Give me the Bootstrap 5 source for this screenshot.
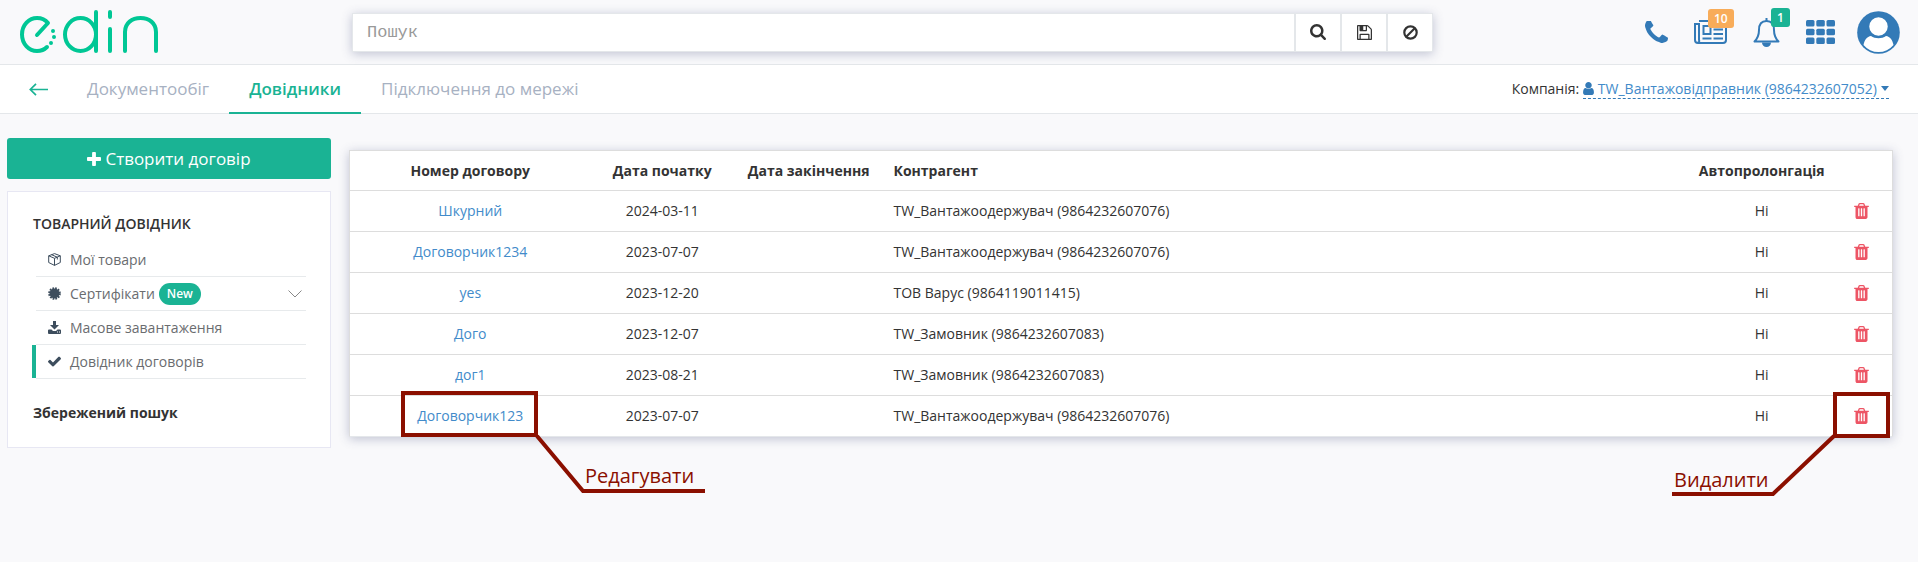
<!DOCTYPE html>
<html lang="uk">
<head>
<meta charset="utf-8">
<meta name="viewport" content="width=device-width, initial-scale=1">
<title>EDIN – Довідник договорів</title>
<link href="https://cdn.jsdelivr.net/npm/bootstrap@5.3.0/dist/css/bootstrap.min.css" rel="stylesheet">
<style>
:root{--green:#1ab394;--blue:#337ab7;--line:#e4e7ea}
body{background:#f9f9fb;color:#333;font:14px/20px "Open Sans","Noto Sans",sans-serif}
a{color:var(--blue);text-decoration:none}
svg{display:block;flex:none}
.fa{fill:currentColor}
.topbar{height:65px;border-bottom:1px solid var(--line);padding-right:18px}
.brand-box{width:352px;padding:0 0 2px 20px}
.search{flex:0 0 56.9%;height:39px;border:1px solid var(--line);box-shadow:0 2px 10px rgba(60,70,120,.3)}
.search .form-control{border:0;border-radius:0;padding:2px 14px 0;font:17px/24px "Liberation Mono",monospace;box-shadow:none}
.search .form-control::placeholder{color:#999;opacity:1}
.search .btn{width:46px;border:0;border-left:2px solid var(--line);border-radius:0;background:#fff;color:#333;padding:0}
.tool{color:var(--blue)}
.tool a+a{margin-left:26px}
.count{position:absolute;top:-10px;height:19px;padding:0 6px;border-radius:3px;color:#fff;font-size:12px;font-weight:600;line-height:19px}
.count-news{left:14px;background:#f8ac59}
.count-bell{left:18px;background:var(--green)}
.tool .profile{margin-left:22px}
.subnav{height:49px;background:#fff;border-bottom:1px solid var(--line);padding:0 29px 0 29px}
.subnav .nav{margin-left:19px;height:49px}
.subnav .nav-link{padding:0 20px;height:49px;line-height:48px;font-size:17px;font-weight:500;color:#a7b1c2;border-bottom:2px solid transparent}
.subnav .nav-link.active{color:var(--green);border-color:var(--green);font-weight:600}
.company{border-bottom:1px dashed var(--blue);line-height:19px}
.company span{color:#428bca}
.side{width:324px;flex:none}
.btn-create{background:var(--green);color:#fff;font-size:17px;line-height:24px;padding:8px;height:41px;border:0;border-radius:3px}
.panel{margin-top:12px;border:1px solid #e7e7f3;background:#fff;padding:22px 24px 24px 25px}
.panel h2{font-size:14px;line-height:20px;margin:0}
.menu{margin:9px 0 24px 3px;padding:0;list-style:none}
.menu li{height:34px;border-bottom:1px solid #e7eaec}
.menu a{color:#6a6c6f;height:33px;padding-left:12px}
.menu svg{color:#3d4d5d;margin-right:9px}
.menu .active{box-shadow:-4px 0 0 var(--green)}
.badge-new{background:var(--green);font-size:12px;line-height:16px;font-weight:600;padding:3px 8px;margin-left:4px}
.list{margin:12px 25px 0 18px;border:1px solid #ddd;border-bottom-color:#e4e7ea;background:#fff;box-shadow:0 2px 10px rgba(60,70,120,.3)}
.list table{table-layout:fixed;width:100%;border-collapse:separate;border-spacing:0}
.list th,.list td{padding:10px 4px;text-align:center}
.list thead tr>*{padding-bottom:9px}
.list td{border-top:1px solid #ddd}
.list .who{text-align:left;padding-left:10px}
.list td a{color:#428bca}
.del{border:0;background:none;padding:0;color:#ed5565;display:block;margin:0 auto}
.note{position:absolute;top:-5px;pointer-events:none;overflow:visible;fill:none;stroke:#8b0f00;stroke-width:4}
.note text{fill:#8b0f00;stroke:none;font-size:20px}
.note-edit{left:calc(50% - 69px)}
.note-del{left:calc(50% - 190px)}
</style>
</head>
<body class="min-vh-100">
<svg width="0" height="0" class="position-absolute" aria-hidden="true"><defs>
<symbol id="trash" viewBox="192 128 1408 1536"><path d="M704 1376v-704q0-14-9-23t-23-9h-64q-14 0-23 9t-9 23v704q0 14 9 23t23 9h64q14 0 23-9t9-23zm256 0v-704q0-14-9-23t-23-9h-64q-14 0-23 9t-9 23v704q0 14 9 23t23 9h64q14 0 23-9t9-23zm256 0v-704q0-14-9-23t-23-9h-64q-14 0-23 9t-9 23v704q0 14 9 23t23 9h64q14 0 23-9t9-23zm-544-992h448l-48-117q-7-9-17-11h-317q-10 2-17 11zm928 32v64q0 14-9 23t-23 9h-96v948q0 83-47 143.5t-113 60.5h-832q-66 0-113-58.5t-47-141.5v-952h-96q-14 0-23-9t-9-23v-64q0-14 9-23t23-9h309l70-167q15-37 54-63t79-26h320q40 0 79 26t54 63l70 167h309q14 0 23 9t9 23z"/></symbol>
</defs></svg>

<header class="topbar d-flex align-items-center">
  <a href="#" class="brand-box flex-shrink-0" aria-label="edin">
    <svg width="138" height="43" viewBox="0 0 138 43" fill="none" stroke="#00c795" stroke-width="4" stroke-linecap="round" stroke-linejoin="round">
      <path d="M17 25 28 13C24 8 19 8 17 8 9 8 2 15 2 24.500S9 41 17 41C21 41 25 39 27 37"/>
      <ellipse cx="60.500" cy="24.500" rx="15.500" ry="16.500"/><path d="M76 2V41M90 2V7M90 19V41M105 41V22C105 13 112 8 120.500 8S136 13 136 22V41"/>
      <path d="M33 21v0M34 27v0M31 33v0" stroke-width="4"/>
    </svg>
  </a>
  <form class="search d-flex bg-white" role="search">
    <input type="text" class="form-control" placeholder="Пошук" aria-label="Пошук">
    <button type="button" class="btn d-flex align-items-center justify-content-center flex-shrink-0" aria-label="Шукати"><svg class="fa" width="16" height="16" viewBox="64 128 1664 1664"><path d="M1216 832q0-185-131.500-316.500t-316.500-131.500-316.500 131.500-131.500 316.500 131.500 316.500 316.500 131.500 316.500-131.500 131.500-316.500zm512 832q0 52-38 90t-90 38q-54 0-90-38l-343-342q-179 124-399 124-143 0-273.500-55.500t-225-150-150-225-55.500-273.500 55.500-273.500 150-225 225-150 273.500-55.500 273.500 55.500 225 150 150 225 55.500 273.500q0 220-124 399l343 343q37 37 37 90z"/></svg></button>
    <button type="button" class="btn d-flex align-items-center justify-content-center flex-shrink-0" aria-label="Зберегти"><svg class="fa" width="15" height="15" viewBox="128 128 1536 1536"><path d="M512 1536h768v-384h-768v384zm896 0h128v-896q0-14-10-38.500t-20-34.500l-281-281q-10-10-34-20t-39-10v416q0 40-28 68t-68 28h-576q-40 0-68-28t-28-68v-416h-128v1280h128v-416q0-40 28-68t68-28h832q40 0 68 28t28 68v416zm-384-928v-320q0-13-9.500-22.500t-22.500-9.500h-192q-13 0-22.500 9.500t-9.500 22.500v320q0 13 9.500 22.500t22.500 9.500h192q13 0 22.500-9.500t9.500-22.500zm640 32v928q0 40-28 68t-68 28h-1344q-40 0-68-28t-28-68v-1344q0-40 28-68t68-28h928q40 0 88 20t76 48l280 280q28 28 48 76t20 88z"/></svg></button>
    <button type="button" class="btn d-flex align-items-center justify-content-center flex-shrink-0" aria-label="Очистити"><svg width="15" height="15" viewBox="0 0 15 15" fill="none" stroke="currentColor" stroke-width="2.200"><circle cx="7.500" cy="7.500" r="6.200"/><path d="M12 3 3 12"/></svg></button>
  </form>
  <div class="d-flex align-items-center ms-auto tool">
    <a href="#" aria-label="Телефон"><svg class="fa" width="23" height="23" viewBox="192 192 1408 1408"><path d="M1600 1240q0 27-10 70.500t-21 68.500q-21 50-122 106-94 51-186 51-27 0-53-3.500t-57.500-12.500-47-14.500-55.500-20.500-49-18q-98-35-175-83-127-79-264-216t-216-264q-48-77-83-175-3-9-18-49t-20.500-55.500-14.500-47-12.500-57.500-3.500-53q0-92 51-186 56-101 106-122 25-11 68.500-21t70.500-10q14 0 21 3 18 6 53 76 11 19 30 54t35 63.500 31 53.500q3 4 17.500 25t21.500 35.500 7 28.500q0 20-28.500 50t-62 55-62 53-28.500 46q0 9 5 22.500t8.500 20.500 14 24 11.500 19q76 137 174 235t235 174q2 1 19 11.500t24 14 20.500 8.500 22.500 5q18 0 46-28.500t53-62 55-62 50-28.500q14 0 28.500 7t35.500 21.500 25 17.500q25 15 53.500 31t63.500 35 54 30q70 35 76 53 3 7 3 21z"/></svg></a>
    <a href="#" class="position-relative" aria-label="Новини"><svg width="33" height="26" viewBox="0 0 33 26" fill="none" stroke="currentColor" stroke-width="2"><path d="M5 2H32V21a3 3 0 0 1-3 3H4a3 3 0 0 1-3-3V5H5V21a2 2 0 0 1-2 3"/><path d="M9.500 7h7v8h-7zM19.500 6H29M19.500 10.500H29M19.500 15H29M8.500 19.500h9M19.500 19.500H29"/></svg><span class="count count-news">10</span></a>
    <a href="#" class="position-relative" aria-label="Сповіщення"><svg width="27" height="29" viewBox="0 0 27 29" fill="none" stroke="currentColor" stroke-width="2" stroke-linejoin="round"><path d="M13.500 3C8 3 6 7 6 12 6 18 4 21 1.500 23.500H25.500C23 21 21 18 21 12 21 7 19 3 13.500 3z"/><path d="M13.500 0v3"/><path d="M9 24.500h9a4.500 4.500 0 0 1-9 0z" fill="currentColor" stroke="none"/></svg><span class="count count-bell">1</span></a>
    <a href="#" aria-label="Застосунки"><svg class="fa" width="29" height="24" viewBox="0 0 29 24"><g id="dots"><rect width="8.500" height="6.500" rx="1.500"/><rect x="10.300" width="8.500" height="6.500" rx="1.500"/><rect x="20.500" width="8.500" height="6.500" rx="1.500"/></g><use href="#dots" y="8.700"/><use href="#dots" y="17.400"/></svg></a>
    <a href="#" class="profile" aria-label="Профіль"><svg width="43" height="43" viewBox="0 0 43 43"><circle cx="21.500" cy="21.500" r="21.300" fill="currentColor"/><path d="M6.500 34C7.500 29 10 25.500 14 25 18 28 25 28 29 25 33 25.500 35.500 29 36.500 34A19.500 19.500 0 0 1 6.500 34z" fill="#fff"/><circle cx="21.500" cy="15.500" r="10" fill="#fff" stroke="currentColor" stroke-width="1.500"/></svg></a>
  </div>
</header>

<div class="subnav d-flex align-items-center">
  <a href="#" aria-label="Назад"><svg width="19" height="13" viewBox="0 0 19 13" fill="none" stroke="#1ab394" stroke-width="1.700"><path d="M7 .8 1.300 6.500 7 12.200M1.500 6.500H19"/></svg></a>
  <nav class="nav flex-nowrap">
    <a class="nav-link" href="#">Документообіг</a>
    <a class="nav-link active" aria-current="page" href="#">Довідники</a>
    <a class="nav-link" href="#">Підключення до мережі</a>
  </nav>
  <div class="ms-auto d-flex text-nowrap">Компанія:&nbsp;<a href="#" class="company d-flex align-items-center"><svg class="fa" width="11" height="13" viewBox="256 128 1280 1536"><path d="M1536 1399q0 109-62.500 187t-150.500 78h-854q-88 0-150.500-78t-62.500-187q0-85 8.500-160.500t31.500-152 58.500-131 94-89 134.500-34.500q131 128 313 128t313-128q76 0 134.500 34.500t94 89 58.500 131 31.500 152 8.500 160.500zm-256-887q0 159-112.500 271.500t-271.500 112.500-271.500-112.500-112.500-271.500 112.500-271.500 271.500-112.500 271.500 112.500 112.500 271.500z"/></svg><span class="ms-1 me-1">TW_Вантажовідправник (9864232607052)</span><svg class="fa" width="8" height="5" viewBox="0 0 8 5"><path d="M0 0h8L4 5z"/></svg></a></div>
</div>

<main class="d-flex align-items-start" style="padding:24px 0 0 7px">
  <aside class="side">
    <button type="button" class="btn btn-create w-100 d-flex align-items-center justify-content-center"><svg class="fa me-1" width="14" height="14" viewBox="192 128 1408 1408"><path d="M1600 736v192q0 40-28 68t-68 28h-416v416q0 40-28 68t-68 28h-192q-40 0-68-28t-28-68v-416h-416q-40 0-68-28t-28-68v-192q0-40 28-68t68-28h416v-416q0-40 28-68t68-28h192q40 0 68 28t28 68v416h416q40 0 68 28t28 68z"/></svg>Створити договір</button>
    <div class="panel">
      <h2 class="fw-semibold">ТОВАРНИЙ ДОВІДНИК</h2>
      <ul class="menu">
        <li><a href="#" class="d-flex align-items-center"><svg width="13" height="13" viewBox="0 0 13 13" fill="none" stroke="currentColor" stroke-linejoin="round"><path d="M6.500 .6 12.300 2.800V9.500L6.500 12.400.7 9.500V2.800zM.7 2.800 6.500 5.300 12.300 2.800M6.500 5.300V12.400M3.500 1.700 9.300 4.200V6.500"/></svg>Мої товари</a></li>
        <li><a href="#" class="d-flex align-items-center"><svg width="13" height="13" viewBox="-6.500 -6.500 13 13"><circle r="4.900" fill="currentColor"/><circle r="5.300" fill="none" stroke="currentColor" stroke-width="2" stroke-dasharray="1.700 1.075"/></svg>Сертифікати<span class="badge rounded-pill badge-new">New</span><svg class="ms-auto me-1" width="14" height="8" viewBox="0 0 14 8" fill="none" stroke="#888"><path d="M.5.5 7 7 13.500.5"/></svg></a></li>
        <li><a href="#" class="d-flex align-items-center"><svg class="fa" width="13" height="13" viewBox="0 0 13 13"><path d="M5 0h3v4h3L6.500 8.500 2 4h3zM1 8.500h2.500L5 10h3l1.500-1.500H12a1 1 0 0 1 1 1V12a1 1 0 0 1-1 1H1a1 1 0 0 1-1-1V9.500a1 1 0 0 1 1-1z"/><path d="M9 11h1M11 11h1" stroke="#fff"/></svg>Масове завантаження</a></li>
        <li><a href="#" class="active d-flex align-items-center"><svg class="fa" width="13" height="11" viewBox="121 306 1550 1216"><path d="M1671 566q0 40-28 68l-724 724-136 136q-28 28-68 28t-68-28l-136-136-362-362q-28-28-28-68t28-68l136-136q28-28 68-28t68 28l294 295 656-657q28-28 68-28t68 28l136 136q28 28 28 68z"/></svg>Довідник договорів</a></li>
      </ul>
      <h2 class="fw-bold">Збережений пошук</h2>
    </div>
  </aside>

  <section class="list flex-grow-1">
    <table>
      <colgroup><col style="width:15.600%"><col style="width:9.300%"><col style="width:9.700%"><col><col style="width:9.100%"><col style="width:3.900%"></colgroup>
      <thead><tr><th>Номер договору</th><th>Дата початку</th><th>Дата закінчення</th><th class="who">Контрагент</th><th>Автопролонгація</th><td class="border-0"></td></tr></thead>
      <tbody>
        <tr><td><a href="#">Шкурний</a></td><td>2024-03-11</td><td></td><td class="who">TW_Вантажоодержувач (9864232607076)</td><td>Ні</td><td><button type="button" class="del" aria-label="Видалити"><svg class="fa" width="15" height="16"><use href="#trash"/></svg></button></td></tr>
        <tr><td><a href="#">Договорчик1234</a></td><td>2023-07-07</td><td></td><td class="who">TW_Вантажоодержувач (9864232607076)</td><td>Ні</td><td><button type="button" class="del" aria-label="Видалити"><svg class="fa" width="15" height="16"><use href="#trash"/></svg></button></td></tr>
        <tr><td><a href="#">yes</a></td><td>2023-12-20</td><td></td><td class="who">ТОВ Варус (9864119011415)</td><td>Ні</td><td><button type="button" class="del" aria-label="Видалити"><svg class="fa" width="15" height="16"><use href="#trash"/></svg></button></td></tr>
        <tr><td><a href="#">Дого</a></td><td>2023-12-07</td><td></td><td class="who">TW_Замовник (9864232607083)</td><td>Ні</td><td><button type="button" class="del" aria-label="Видалити"><svg class="fa" width="15" height="16"><use href="#trash"/></svg></button></td></tr>
        <tr><td><a href="#">дог1</a></td><td>2023-08-21</td><td></td><td class="who">TW_Замовник (9864232607083)</td><td>Ні</td><td><button type="button" class="del" aria-label="Видалити"><svg class="fa" width="15" height="16"><use href="#trash"/></svg></button></td></tr>
        <tr>
          <td class="position-relative"><a href="#">Договорчик123</a>
            <svg class="note note-edit" width="304" height="103"><rect x="2" y="2" width="133" height="42"/><path d="M136 45 182 100H304"/><text x="184" y="92">Редагувати</text></svg></td>
          <td>2023-07-07</td><td></td><td class="who">TW_Вантажоодержувач (9864232607076)</td><td>Ні</td>
          <td class="position-relative"><button type="button" class="del" aria-label="Видалити"><svg class="fa" width="15" height="16"><use href="#trash"/></svg></button>
            <svg class="note note-del" width="218" height="105"><rect x="163" y="3" width="53" height="42"/><path d="M162 45 101 103H0"/><text x="2" y="96">Видалити</text></svg></td>
        </tr>
      </tbody>
    </table>
  </section>
</main>
<script src="https://cdn.jsdelivr.net/npm/bootstrap@5.3.0/dist/js/bootstrap.bundle.min.js"></script>
</body>
</html>
